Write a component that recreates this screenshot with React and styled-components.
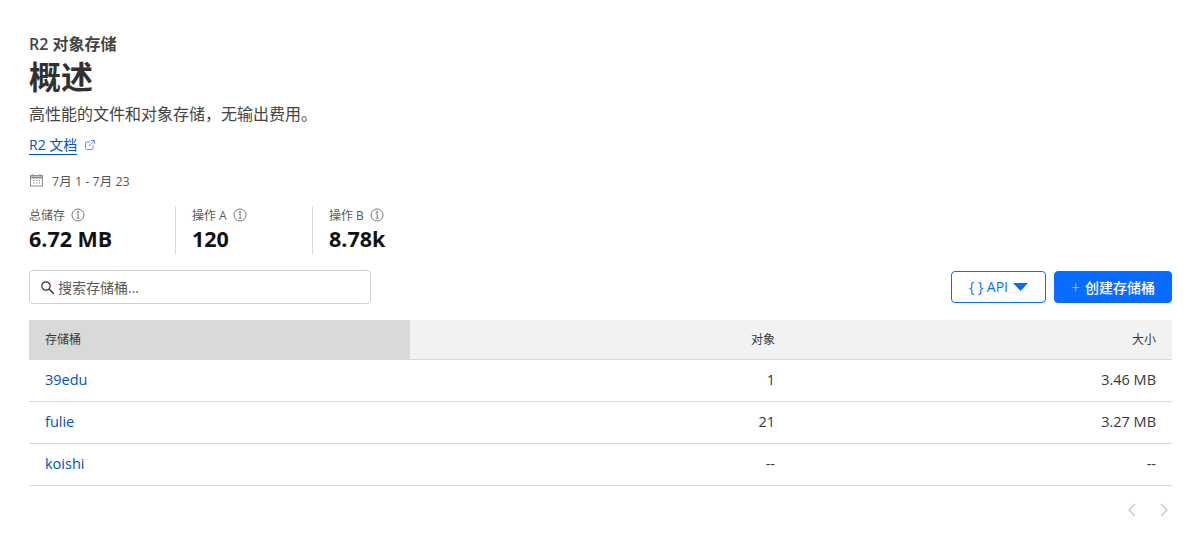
import React from "react";
import styled, { createGlobalStyle } from "styled-components";
import { ExternalLink } from "lucide-react";

const GlobalStyle = createGlobalStyle`
  html, body {
    margin: 0;
    background: #fff;
  }
  body {
    font-family: "Open Sans", "Noto Sans CJK SC", sans-serif;
    color: #36393a;
  }
`;

const Page = styled.div`
  padding: 34px 19px 0 29px;
`;

const Eyebrow = styled.div`
  font-size: 16px;
  line-height: 20px;
  font-weight: 600;
  color: #444;
`;

const Title = styled.h1`
  margin: -2px 0 0;
  font-size: 32px;
  line-height: 46px;
  font-weight: 700;
  color: #313131;
  font-family: "Noto Sans CJK SC", sans-serif;
`;

const Description = styled.p`
  margin: 6px 0 0;
  font-size: 16px;
  line-height: 20px;
  color: #444;
`;

const DocRow = styled.div`
  display: flex;
  align-items: center;
  gap: 7px;
  margin-top: 11px;
  height: 20px;
`;

const DocLink = styled.a`
  font-size: 14px;
  line-height: 18px;
  color: #0051c3;
  text-decoration: none;
  border-bottom: 1px solid #0051c3;
`;

const DocIcon = styled(ExternalLink)`
  width: 12px;
  height: 12px;
  color: #6f94d8;
`;

const DateRow = styled.div`
  display: flex;
  align-items: center;
  gap: 8px;
  margin-top: 15px;
  height: 20px;
  font-size: 12.5px;
  color: #555;
`;

const Stats = styled.div`
  display: flex;
  margin-top: 16px;
  height: 48px;
`;

const Stat = styled.div`
  width: ${(p) => p.$width}px;
  padding-left: ${(p) => (p.$first ? 0 : 16)}px;
  box-sizing: border-box;
  border-left: ${(p) => (p.$first ? "none" : "1px solid #d9d9d9")};
`;

const StatLabel = styled.div`
  display: flex;
  align-items: center;
  gap: 6px;
  height: 18px;
  font-size: 12px;
  color: #595959;
`;

const StatValue = styled.div`
  margin-top: 1px;
  font-size: 21.5px;
  line-height: 27px;
  font-weight: 700;
  color: #111;
`;

const Toolbar = styled.div`
  display: flex;
  align-items: center;
  justify-content: space-between;
  margin-top: 16px;
  height: 34px;
`;

const SearchBox = styled.label`
  display: flex;
  align-items: center;
  gap: 3px;
  width: 342px;
  height: 34px;
  box-sizing: border-box;
  padding-left: 10px;
  border: 1px solid #d0d0d0;
  border-radius: 4px;
`;

const SearchInput = styled.input`
  flex: 1;
  min-width: 0;
  border: 0;
  outline: 0;
  padding: 0;
  font: 14px "Open Sans", "Noto Sans CJK SC", sans-serif;
  color: #444;
  &::placeholder {
    color: #595959;
    opacity: 1;
  }
`;

const Actions = styled.div`
  display: flex;
  gap: 8px;
`;

const Button = styled.button`
  display: flex;
  align-items: center;
  justify-content: center;
  gap: 5px;
  width: ${(p) => p.$width}px;
  height: 32px;
  padding: 0 0 1px;
  border: 1px solid #0a6cff;
  border-radius: 4px;
  font: ${(p) => (p.$primary ? 500 : 400)} 14px "Open Sans", "Noto Sans CJK SC", sans-serif;
  color: ${(p) => (p.$primary ? "#fff" : "#0a6cff")};
  background: ${(p) => (p.$primary ? "#0a6cff" : "#fff")};
`;

const Plus = styled.span`
  font-size: 16px;
  font-weight: 300;
  line-height: 1;
  opacity: 0.75;
`;

const Table = styled.table`
  width: 100%;
  margin-top: 16px;
  border-collapse: collapse;
  table-layout: fixed;
`;

const HeadCell = styled.th`
  box-sizing: border-box;
  height: 39px;
  padding: 0 16px;
  font-size: 12px;
  font-weight: 400;
  color: #36393a;
  text-align: ${(p) => (p.$right ? "right" : "left")};
  width: ${(p) => (p.$width ? `${p.$width}px` : "auto")};
  background: ${(p) => (p.$sorted ? "#d9d9d9" : "#f2f2f2")};
  border-bottom: 1px solid #d9d9d9;
`;

const Cell = styled.td`
  box-sizing: border-box;
  height: 42px;
  padding: 0 16px 2px;
  font-size: 14.5px;
  color: #36393a;
  text-align: ${(p) => (p.$right ? "right" : "left")};
  border-bottom: 1px solid #d9d9d9;
`;

const BucketLink = styled.a`
  color: #0051c3;
  text-decoration: none;
`;

const Pager = styled.div`
  display: flex;
  justify-content: flex-end;
  gap: 22px;
  margin-top: 17px;
  padding-right: 3px;
`;

const Calendar = () => (
  <svg width="15" height="14" viewBox="0 0 15 14" fill="none" stroke="#8f8f8f">
    <rect x="1.5" y="2.5" width="12" height="10.5" />
    <path d="M1.5 4.5h12" strokeWidth="2" />
    <path d="M4 1v2.5M11 1v2.5" />
    <path d="M4 7.5h1.5M6.8 7.5h1.5M9.6 7.5h1.5M4 10h1.5M6.8 10h1.5M9.6 10h1.5" />
  </svg>
);

const Info = () => (
  <svg width="14" height="14" viewBox="0 0 14 14" fill="none" stroke="#777">
    <circle cx="7" cy="7" r="6" />
    <path d="M5.6 6h1.6v4M5.5 10.2h3.2M6.6 3.4h1.1v1.2H6.6z" strokeWidth="0.9" />
  </svg>
);

const Search = () => (
  <svg width="15" height="15" viewBox="0 0 15 15" fill="none" stroke="#333" strokeWidth="1.2">
    <circle cx="6" cy="6" r="4.2" />
    <path d="M9.2 9.2l4.6 4.6" strokeWidth="1.5" />
  </svg>
);

const Caret = () => (
  <svg width="15" height="8" viewBox="0 0 15 8" fill="#0a6cff">
    <path d="M0 0h15L7.5 8z" />
  </svg>
);

const Chevron = ({ flip }) => (
  <svg width="10" height="14" viewBox="0 0 10 14" fill="none" stroke="#c4c4c4" strokeWidth="1.3">
    <path d={flip ? "M2 1l6 6-6 6" : "M8 1L2 7l6 6"} />
  </svg>
);

const buckets = [
  { name: "39edu", objects: "1", size: "3.46 MB" },
  { name: "fulie", objects: "21", size: "3.27 MB" },
  { name: "koishi", objects: "--", size: "--" },
];

const stats = [
  { label: "总储存", value: "6.72 MB", width: 146 },
  { label: "操作 A", value: "120", width: 137 },
  { label: "操作 B", value: "8.78k", width: 137 },
];

export default function App() {
  return (
    <Page>
      <GlobalStyle />
      <Eyebrow>R2 对象存储</Eyebrow>
      <Title>概述</Title>
      <Description>高性能的文件和对象存储，无输出费用。</Description>
      <DocRow>
        <DocLink href="#">R2 文档</DocLink>
        <DocIcon />
      </DocRow>
      <DateRow>
        <Calendar />
        7月 1 - 7月 23
      </DateRow>
      <Stats>
        {stats.map((s, i) => (
          <Stat key={s.label} $first={i === 0} $width={s.width}>
            <StatLabel>
              {s.label}
              <Info />
            </StatLabel>
            <StatValue>{s.value}</StatValue>
          </Stat>
        ))}
      </Stats>
      <Toolbar>
        <SearchBox>
          <Search />
          <SearchInput placeholder="搜索存储桶..." />
        </SearchBox>
        <Actions>
          <Button $width={95}>
            {"{ } API"} <Caret />
          </Button>
          <Button $primary $width={118}>
            <Plus>+</Plus> 创建存储桶
          </Button>
        </Actions>
      </Toolbar>
      <Table>
        <thead>
          <tr>
            <HeadCell $sorted $width={381}>存储桶</HeadCell>
            <HeadCell $right>对象</HeadCell>
            <HeadCell $right>大小</HeadCell>
          </tr>
        </thead>
        <tbody>
          {buckets.map((b) => (
            <tr key={b.name}>
              <Cell>
                <BucketLink href="#">{b.name}</BucketLink>
              </Cell>
              <Cell $right>{b.objects}</Cell>
              <Cell $right>{b.size}</Cell>
            </tr>
          ))}
        </tbody>
      </Table>
      <Pager>
        <Chevron />
        <Chevron flip />
      </Pager>
    </Page>
  );
}
